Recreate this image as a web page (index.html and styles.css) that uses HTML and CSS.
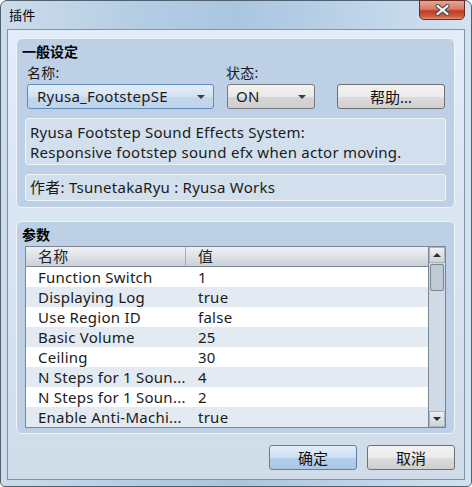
FILE: index.html
```html
<!DOCTYPE html>
<html lang="zh-CN">
<head>
    <meta charset="UTF-8">
    <title>插件</title>
    <link rel="stylesheet" href="styles.css">
</head>
<body>
    <div class="window">
        <div class="titlebar">
            <span class="title">插件</span>
            <button class="close">
                <svg width="15" height="12" viewBox="0 0 15 12">
                    <path d="M2.5 2 L12.5 10 M12.5 2 L2.5 10" stroke="#4a4f55" stroke-width="4.2" stroke-linecap="round"/>
                    <path d="M2.5 2 L12.5 10 M12.5 2 L2.5 10" stroke="#fff" stroke-width="2.2" stroke-linecap="round"/>
                </svg>
            </button>
        </div>

        <div class="client">
            <div class="group general">
                <div class="group-title">一般设定</div>
                <div class="row labels">
                    <span class="lbl-name">名称:</span>
                    <span class="lbl-state">状态:</span>
                </div>
                <div class="row controls">
                    <div class="combo combo-name focus">Ryusa_FootstepSE<i class="arrow"></i></div>
                    <div class="combo combo-state">ON<i class="arrow"></i></div>
                    <button class="btn btn-help">帮助...</button>
                </div>
                <div class="info desc">
                    Ryusa Footstep Sound Effects System:<br>
                    Responsive footstep sound efx when actor moving.
                </div>
                <div class="info author">作者: TsunetakaRyu : Ryusa Works</div>
            </div>

            <div class="group params">
                <div class="group-title">参数</div>
                <div class="table">
                    <div class="list">
                        <div class="thead">
                            <div class="col-name">名称</div>
                            <div class="col-val">值</div>
                        </div>
                        <div class="tr"><div class="col-name">Function Switch</div><div class="col-val">1</div></div>
                        <div class="tr"><div class="col-name">Displaying Log</div><div class="col-val">true</div></div>
                        <div class="tr"><div class="col-name">Use Region ID</div><div class="col-val">false</div></div>
                        <div class="tr"><div class="col-name">Basic Volume</div><div class="col-val">25</div></div>
                        <div class="tr"><div class="col-name">Ceiling</div><div class="col-val">30</div></div>
                        <div class="tr"><div class="col-name">N Steps for 1 Soun...</div><div class="col-val">4</div></div>
                        <div class="tr"><div class="col-name">N Steps for 1 Soun...</div><div class="col-val">2</div></div>
                        <div class="tr"><div class="col-name">Enable Anti-Machi...</div><div class="col-val">true</div></div>
                    </div>
                    <div class="scrollbar">
                        <div class="sb-btn"><i class="up"></i></div>
                        <div class="sb-track"><div class="sb-thumb"></div></div>
                        <div class="sb-btn"><i class="down"></i></div>
                    </div>
                </div>
            </div>

            <div class="footer">
                <button class="btn btn-default">确定</button>
                <button class="btn">取消</button>
            </div>
        </div>
    </div>
</body>
</html>
```

FILE: styles.css
```css
* {
    box-sizing: border-box;
}
body {
    margin: 0;
    font-family: "Noto Sans", "Noto Sans CJK SC", sans-serif;
    font-size: 15px;
    letter-spacing: 0.25px;
    color: #1b1b1b;
    background: #fff;
}
.window {
    width: 472px;
    height: 487px;
    border: 1px solid #50606f;
    border-radius: 7px 7px 5px 5px;
    background: linear-gradient(to right, #cddcea 0%, #b3cde4 30%, #aac6df 50%, #bcd3e9 75%, #d3e2f0 100%);
    padding: 0 6px 6px 6px;
    display: flex;
    flex-direction: column;
}
.titlebar {
    height: 28px;
    display: flex;
    align-items: flex-start;
}
.title {
    padding: 6px 0 0 2px;
    font-size: 13px;
    line-height: 16px;
    color: #000;
}
.close {
    margin-left: auto;
    margin-top: -1px;
    width: 46px;
    height: 20px;
    border: 1px solid #6a2b22;
    border-radius: 0 0 5px 5px;
    background: linear-gradient(#e7a697 0%, #d77a65 45%, #c13d24 55%, #d05a3f 85%, #e0907a 100%);
    display: flex;
    align-items: center;
    justify-content: center;
    padding: 0;
}
.client {
    flex: 1;
    border: 1px solid #8394a8;
    background: linear-gradient(#e2edf9, #d6e2ee 60%, #d0dce8);
    padding: 8px 9px 0 8px;
    display: flex;
    flex-direction: column;
}
.group {
    border: 1px solid #eef4fa;
    border-radius: 6px;
    background: #bdd0e6;
    padding: 4px 8px 6px 9px;
}
.group-title {
    font-size: 14px;
    font-weight: bold;
    line-height: 18px;
    margin-left: -4px;
    letter-spacing: 0;
    color: #000;
}
.row {
    display: flex;
}
.labels {
    margin-top: 4px;
    line-height: 16px;
    font-size: 14px;
}
.lbl-name {
    width: 200px;
    padding-left: 1px;
}
.controls {
    margin-top: 3px;
    height: 25px;
}
.combo {
    position: relative;
    height: 25px;
    line-height: 23px;
    border: 1px solid #7a7a7a;
    border-radius: 3px;
    background: linear-gradient(#f3f3f3, #e8e8e8 50%, #d6d6d6 52%, #cfcfcf);
    padding-left: 9px;
    font-size: 15px;
}
.combo.focus {
    border-color: #5d8dbd;
    background: linear-gradient(#e4eef9, #d3e2f2 50%, #c4d7ec 52%, #bfd3ea);
}
.combo-name {
    width: 187px;
    margin-left: 1px;
}
.combo-state {
    width: 88px;
    margin-left: 13px;
    padding-left: 8px;
}
.arrow {
    position: absolute;
    right: 8px;
    top: 10px;
    border-left: 4px solid transparent;
    border-right: 4px solid transparent;
    border-top: 4px solid #3d3d3d;
}
.btn {
    height: 25px;
    width: 88px;
    border: 1px solid #707070;
    border-radius: 3px;
    background: linear-gradient(#f2f2f2, #ebebeb 50%, #dddddd 52%, #cfcfcf);
    font-family: "Noto Sans", "Noto Sans CJK SC", sans-serif;
    font-size: 15px;
    color: #111;
    padding: 0;
}
.btn-help {
    width: 108px;
    margin-left: 22px;
}
.info {
    margin-top: 9px;
    border: 1px solid #eef3f8;
    border-radius: 3px;
    background: #d2dfec;
    padding: 3px 4px;
    font-size: 15px;
    line-height: 20px;
    margin-left: -1px;
}
.desc {
    height: 47px;
}
.author {
    height: 27px;
    line-height: 19px;
}
.params {
    margin-top: 13px;
    padding-bottom: 5px;
}
.params .group-title {
    margin-bottom: 2px;
}
.table {
    margin-left: -1px;
    border: 1px solid #7b8693;
    height: 182px;
    display: flex;
    background: #fff;
}
.list {
    flex: 1;
}
.thead {
    display: flex;
    height: 20px;
    line-height: 19px;
    border-bottom: 1px solid #7d8893;
    background: linear-gradient(#eef1f4, #dde2e7 50%, #c9d0d7);
    font-size: 15px;
    color: #222;
}
.thead .col-name {
    width: 160px;
    padding-left: 12px;
    border-right: 1px solid #a5aeb8;
}
.thead .col-val {
    padding-left: 12px;
}
.tr {
    display: flex;
    height: 20px;
    line-height: 21px;
    font-size: 15px;
}
.tr:nth-child(odd) {
    background: #e3eaf2;
}
.tr .col-name {
    width: 160px;
    padding-left: 12px;
    white-space: nowrap;
}
.tr .col-val {
    padding-left: 12px;
}
.scrollbar {
    width: 17px;
    border-left: 1px solid #7b8693;
    background: #cfdae6;
    display: flex;
    flex-direction: column;
}
.sb-btn {
    height: 16px;
    background: linear-gradient(#eef0f2, #cdd3d9);
    border: 1px solid #aab3bd;
    display: flex;
    align-items: center;
    justify-content: center;
}
.sb-btn .up {
    border-left: 4px solid transparent;
    border-right: 4px solid transparent;
    border-bottom: 4px solid #2e2e2e;
}
.sb-btn .down {
    border-left: 4px solid transparent;
    border-right: 4px solid transparent;
    border-top: 4px solid #2e2e2e;
}
.sb-track {
    flex: 1;
    padding: 1px 1px 0 1px;
}
.sb-thumb {
    height: 27px;
    border: 1px solid #7a8591;
    border-radius: 2px;
    background: #c0cbd6;
}
.footer {
    display: flex;
    justify-content: flex-end;
    gap: 10px;
    margin-top: 11px;
}
.footer .btn {
    height: 25px;
}
.btn-default {
    border-color: #5c7fa5;
    background: linear-gradient(#e3eefa, #cfe0f2 50%, #b5cfea 52%, #a9c7e6);
}
```
